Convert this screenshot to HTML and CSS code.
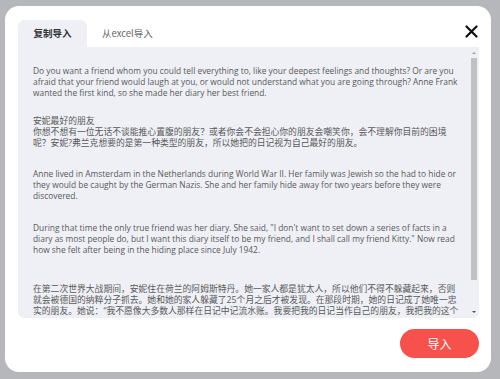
FILE: index.html
```html
<!DOCTYPE html>
<html lang="zh">
<head>
<meta charset="utf-8">
<link rel="stylesheet" href="styles.css">
</head>
<body>
<div class="modal">
  <div class="header">
    <div class="tabs">
      <div class="tab active">复制导入</div>
      <div class="tab">从excel导入</div>
    </div>
    <div class="close">
      <svg width="13" height="13" viewBox="0 0 13 13"><path d="M1.5 1.5 L11.5 11.5 M11.5 1.5 L1.5 11.5" stroke="#111" stroke-width="2.2" stroke-linecap="round"/></svg>
    </div>
  </div>
  <div class="panel">
    <div class="text">
      <p class="p1">Do you want a friend whom you could tell everything to, like your deepest feelings and thoughts? Or are you<br>afraid that your friend would laugh at you, or would not understand what you are going through? Anne Frank<br>wanted the first kind, so she made her diary her best friend.</p>
      <p class="p2 zh">安妮最好的朋友<br>你想不想有一位无话不谈能推心置腹的朋友？或者你会不会担心你的朋友会嘲笑你，会不理解你目前的困境<br>呢？安妮?弗兰克想要的是第一种类型的朋友，所以她把的日记视为自己最好的朋友。</p>
      <p class="p3">Anne lived in Amsterdam in the Netherlands during World War II. Her family was Jewish so the had to hide or<br>they would be caught by the German Nazis. She and her family hide away for two years before they were<br>discovered.</p>
      <p class="p4">During that time the only true friend was her diary. She said, "I don't want to set down a series of facts in a<br>diary as most people do, but I want this diary itself to be my friend, and I shall call my friend Kitty." Now read<br>how she felt after being in the hiding place since July 1942.</p>
      <p class="p5 zh">在第二次世界大战期间，安妮住在荷兰的阿姆斯特丹。她一家人都是犹太人，所以他们不得不躲藏起来，否则<br>就会被德国的纳粹分子抓去。她和她的家人躲藏了25个月之后才被发现。在那段时期，她的日记成了她唯一忠<br>实的朋友。她说：“我不愿像大多数人那样在日记中记流水账。我要把我的日记当作自己的朋友，我把我的这个</p>
    </div>
    <div class="scrollbar">
      <div class="arrow up"></div>
      <div class="thumb"></div>
      <div class="arrow down"></div>
    </div>
  </div>
  <div class="footer">
    <button class="btn">导入</button>
  </div>
</div>
</body>
</html>
```
FILE: styles.css
```css
html, body {
  margin: 0;
  padding: 0;
}
body {
  width: 500px;
  height: 379px;
  background: #b6b7ba;
  overflow: hidden;
  font-family: "Open Sans", "Noto Sans CJK SC", sans-serif;
  padding-top: 6px;
  padding-left: 5px;
  box-sizing: border-box;
}
.modal {
  width: 486px;
  height: 366px;
  background: #fff;
  border-radius: 14px;
  box-sizing: border-box;
  padding: 14px 12px 0 13px;
  display: flex;
  flex-direction: column;
}
.header {
  display: flex;
  justify-content: space-between;
  align-items: flex-start;
  height: 27px;
}
.tabs {
  display: flex;
  height: 27px;
}
.tab {
  font-size: 9.5px;
  color: #666;
  line-height: 27px;
  padding: 0 15px;
  font-family: "Noto Sans CJK SC", sans-serif;
}
.tab.active {
  background: #eef0f6;
  border-radius: 6px 6px 0 0;
  color: #333;
  font-weight: 700;
  width: 69px;
  box-sizing: border-box;
  text-align: center;
  padding: 0;
}
.close {
  width: 14px;
  height: 14px;
  display: flex;
  align-items: center;
  justify-content: center;
  margin-right: 1px;
  margin-top: 4px;
}
.panel {
  width: 461px;
  height: 271px;
  background: #eef0f6;
  border-radius: 0 0 6px 6px;
  display: flex;
  overflow: hidden;
}
.text {
  flex: 1;
  padding: 18px 0 0 15px;
  color: #595959;
  font-size: 8.4px;
  line-height: 11px;
  overflow: hidden;
  white-space: nowrap;
}
.text p {
  margin: 0;
}
.text .zh {
  font-size: 8.8px;
}
.text .p2 { margin-top: 18px; }
.text .p3 { margin-top: 19px; }
.text .p4 { margin-top: 21px; }
.text .p5 { margin-top: 29px; }
.scrollbar {
  width: 8px;
  margin: 2px 1px 2px 0;
  display: flex;
  flex-direction: column;
  align-items: center;
}
.arrow {
  width: 0;
  height: 0;
  border-left: 2px solid transparent;
  border-right: 2px solid transparent;
  margin: 3px 0;
}
.arrow.up { border-bottom: 2px solid #a0a0a0; }
.arrow.down { border-top: 2px solid #505050; margin-top: auto; }
.thumb {
  width: 6px;
  height: 222px;
  background: #c1c1c1;
  margin-top: 1px;
}
.footer {
  display: flex;
  justify-content: flex-end;
  padding-top: 11px;
}
.btn {
  width: 79px;
  height: 29px;
  border: none;
  border-radius: 15px;
  background: #f6524b;
  color: #fff;
  font-size: 12px;
  font-family: "Noto Sans CJK SC", sans-serif;
  padding: 0;
}
```
